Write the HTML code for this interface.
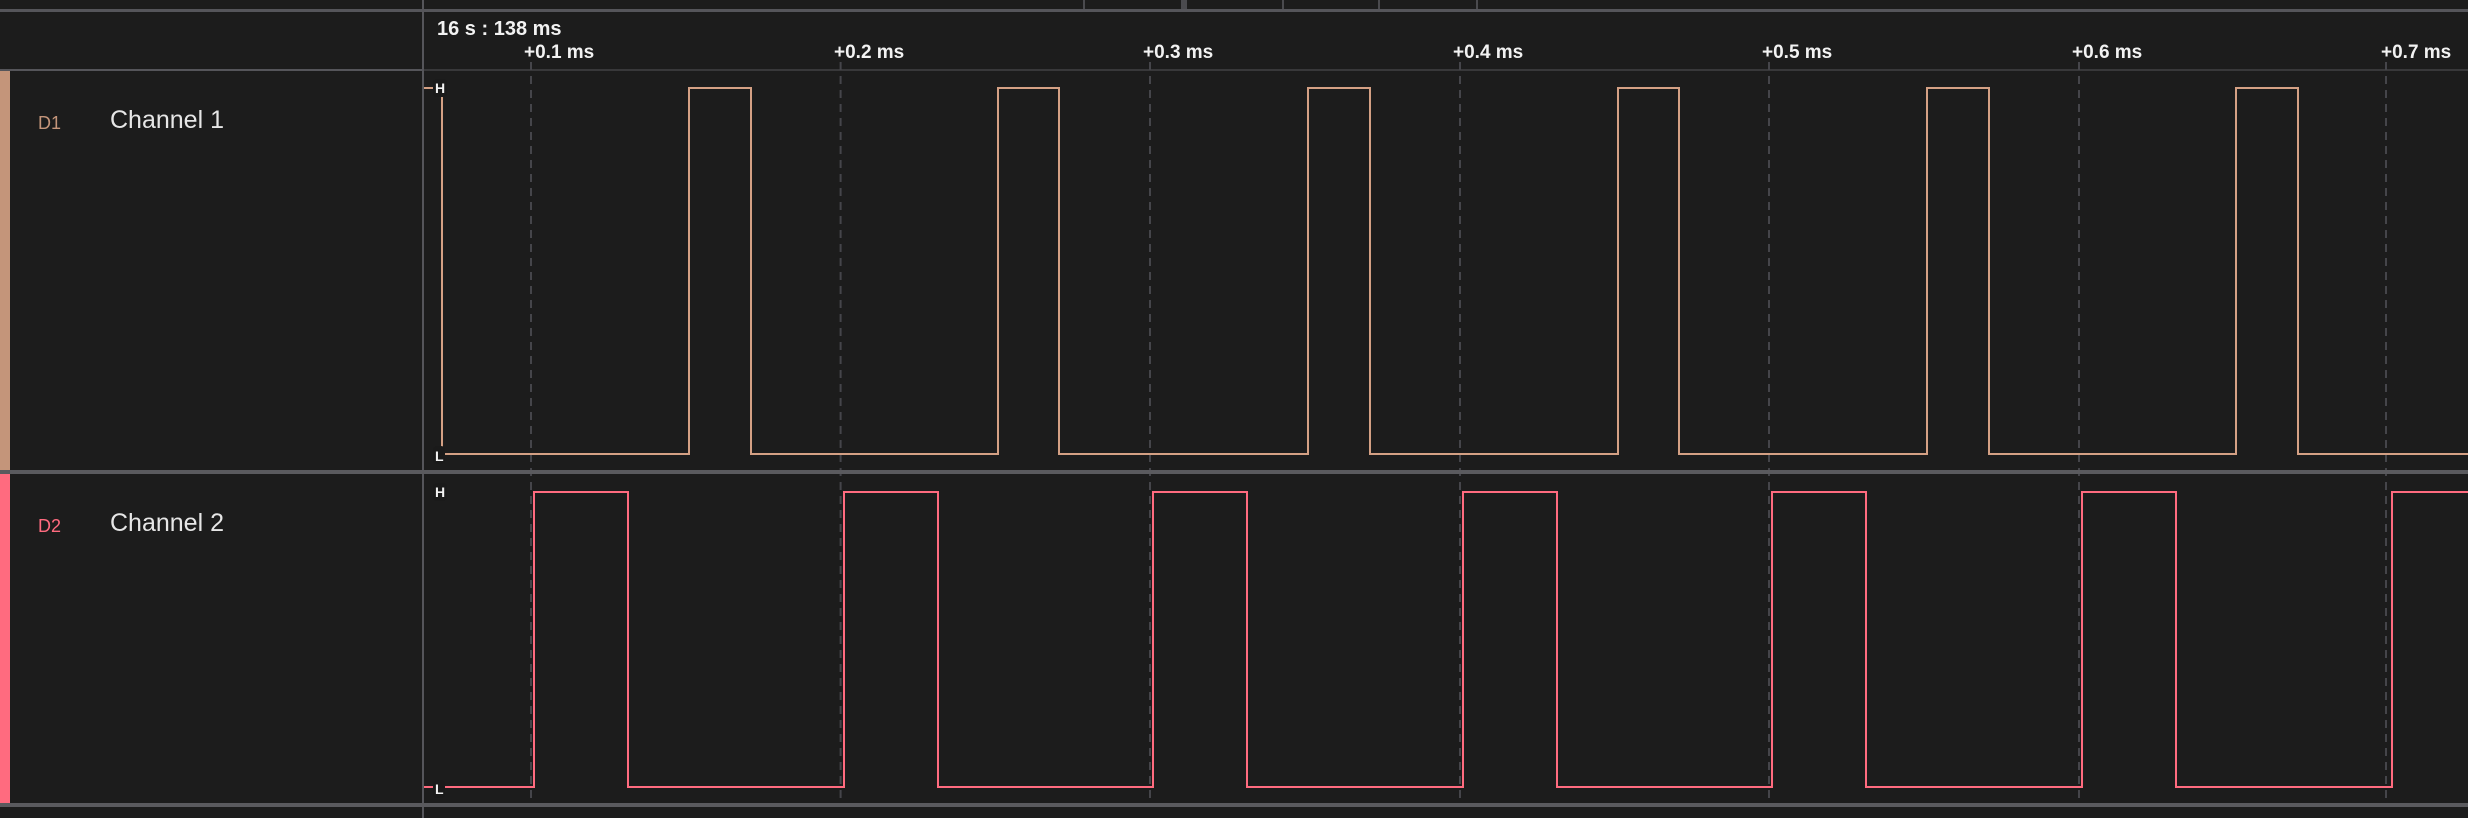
<!DOCTYPE html>
<html><head><meta charset="utf-8"><style>
html,body{margin:0;padding:0;background:#1c1c1c;width:2468px;height:818px;overflow:hidden}
svg{display:block}
text{font-family:"Liberation Sans",sans-serif}
</style></head><body>
<svg width="2468" height="818" viewBox="0 0 2468 818" xmlns="http://www.w3.org/2000/svg">
<rect width="2468" height="818" fill="#1c1c1c"/>
<rect x="1083" y="0" width="2" height="10" fill="#4a4a4e"/>
<rect x="1181" y="0" width="6" height="10" fill="#4a4a4e"/>
<rect x="1282" y="0" width="2" height="10" fill="#4a4a4e"/>
<rect x="1378" y="0" width="2" height="10" fill="#4a4a4e"/>
<rect x="1476" y="0" width="2" height="10" fill="#4a4a4e"/>
<rect x="0" y="9" width="2468" height="3" fill="#55555a"/>
<rect x="0" y="69" width="423" height="2" fill="#55555a"/>
<rect x="423" y="69" width="2045" height="2" fill="#38383a"/>
<rect x="422" y="0" width="2" height="818" fill="#55555a"/>
<g stroke="#45454a" stroke-width="2" stroke-dasharray="8,6">
<line x1="531" y1="62" x2="531" y2="805"/>
<line x1="840.6" y1="62" x2="840.6" y2="805"/>
<line x1="1150" y1="62" x2="1150" y2="805"/>
<line x1="1460" y1="62" x2="1460" y2="805"/>
<line x1="1769" y1="62" x2="1769" y2="805"/>
<line x1="2079" y1="62" x2="2079" y2="805"/>
<line x1="2386" y1="62" x2="2386" y2="805"/>
</g>
<text x="437" y="35" fill="#f2f2f2" font-size="20" font-weight="bold">16 s : 138 ms</text>
<g fill="#f2f2f2" font-size="19" font-weight="bold">
<text x="524" y="58">+0.1 ms</text>
<text x="834" y="58">+0.2 ms</text>
<text x="1143" y="58">+0.3 ms</text>
<text x="1453" y="58">+0.4 ms</text>
<text x="1762" y="58">+0.5 ms</text>
<text x="2072" y="58">+0.6 ms</text>
<text x="2381" y="58">+0.7 ms</text>
</g>
<rect x="0" y="470" width="2468" height="4" fill="#5a5a5e"/>
<rect x="0" y="803" width="2468" height="4" fill="#5a5a5e"/>
<rect x="0" y="71" width="10" height="399" fill="#c4957a"/>
<rect x="0" y="474" width="10" height="329" fill="#ff6b7f"/>
<text x="38" y="129" fill="#c4957a" font-size="18">D1</text>
<text x="110" y="128" fill="#e6e6e6" font-size="25">Channel 1</text>
<text x="38" y="532" fill="#ff6b7f" font-size="18">D2</text>
<text x="110" y="531" fill="#e6e6e6" font-size="25">Channel 2</text>
<polyline fill="none" stroke="#d4a084" stroke-width="2" points="424,88 442,88 442,454 689,454 689,88 751,88 751,454 998,454 998,88 1059,88 1059,454 1308,454 1308,88 1370,88 1370,454 1618,454 1618,88 1679,88 1679,454 1927,454 1927,88 1989,88 1989,454 2236,454 2236,88 2298,88 2298,454 2468,454"/>
<polyline fill="none" stroke="#ff6b7f" stroke-width="2" points="424,787 534,787 534,492 628,492 628,787 844,787 844,492 938,492 938,787 1153,787 1153,492 1247,492 1247,787 1463,787 1463,492 1557,492 1557,787 1772,787 1772,492 1866,492 1866,787 2082,787 2082,492 2176,492 2176,787 2392,787 2392,492 2468,492"/>
<g font-size="14" font-weight="bold" fill="#f2f2f2">
<rect x="433" y="79" width="14" height="18" rx="4" fill="#1a1a1a"/><text x="435" y="93">H</text>
<rect x="433" y="446" width="12" height="18" rx="4" fill="#1a1a1a"/><text x="435" y="461">L</text>
<rect x="433" y="483" width="14" height="18" rx="4" fill="#1a1a1a"/><text x="435" y="497">H</text>
<rect x="433" y="780" width="12" height="18" rx="4" fill="#1a1a1a"/><text x="435" y="794">L</text>
</g>
</svg>
</body></html>
